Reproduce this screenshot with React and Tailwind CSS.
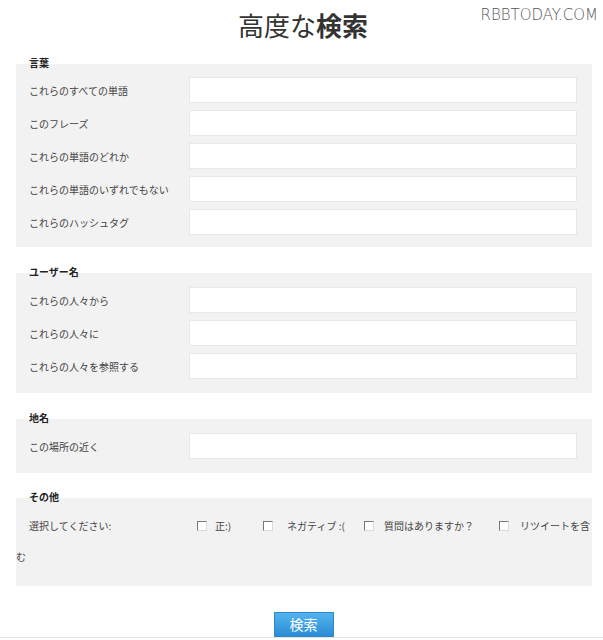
import React from 'react';

const jp = { fontFamily: '"Noto Sans CJK JP", "Noto Sans", sans-serif' };

const sections = [
  {
    title: '言葉',
    pad: 'pt-[13px] pb-[12px]',
    fields: ['これらのすべての単語', 'このフレーズ', 'これらの単語のどれか', 'これらの単語のいずれでもない', 'これらのハッシュタグ'],
  },
  {
    title: 'ユーザー名',
    pad: 'pt-[14px] pb-[14px]',
    fields: ['これらの人々から', 'これらの人々に', 'これらの人々を参照する'],
  },
  {
    title: '地名',
    pad: 'pt-[14px] pb-[14px]',
    fields: ['この場所の近く'],
  },
];

const Check = () => (
  <span className="inline-block w-[10px] h-[10px] align-middle bg-white border-t border-l border-t-[#7a7a7a] border-l-[#7a7a7a] border-b border-r border-b-[#dcdcdc] border-r-[#dcdcdc] -mt-[2px]" />
);

const SectionLabel = ({ children }) => (
  <div className="h-[14px] pl-[13px] text-[10px] leading-[14px] font-bold text-[#222]">{children}</div>
);

export default function App() {
  return (
    <div className="relative w-[603px] h-[640px] overflow-hidden bg-white" style={jp}>
      {/* watermark */}
      <div
        className="absolute right-[5px] top-[4px] text-[15px] font-extralight text-[#555]"
        style={{ fontFamily: '"DejaVu Sans", "Liberation Sans", sans-serif' }}
      >
        RBBTODAY.COM
      </div>

      <h1 className="pt-[12px] pl-[3px] text-center text-[26px] leading-[26px] text-[#333]">
        高度な<span className="font-bold">検索</span>
      </h1>

      <div className="mt-[18px] ml-[16px] w-[576px] flex flex-col gap-[18px]">
        {sections.map((s) => (
          <div key={s.title}>
            <SectionLabel>{s.title}</SectionLabel>
            <div className={`-mt-[6px] bg-[#f2f2f2] pl-[13px] pr-[15px] flex flex-col gap-[7px] ${s.pad}`}>
              {s.fields.map((f) => (
                <div key={f} className="flex items-center h-[26px]">
                  <span className="w-[160px] text-[10px] text-[#444]">{f}</span>
                  <div className="flex-1 h-[26px] bg-white border border-[#e8e8e8]" />
                </div>
              ))}
            </div>
          </div>
        ))}

        <div className="-mt-[1px]">
          <SectionLabel>その他</SectionLabel>
          <div className="-mt-[6px] bg-[#f2f2f2] pt-[12px] pb-[14px] text-[10px] leading-[31px] text-[#444]">
            <span className="inline-block w-[181px] pl-[13px]">選択してください:</span>
            <Check />
            <span className="inline-block w-[56px] pl-[8px]">正:)</span>
            <Check />
            <span className="inline-block w-[91px] pl-[14px]">ネガティブ :(</span>
            <Check />
            <span className="inline-block w-[125px] pl-[10px]">質問はありますか？</span>
            <Check />
            <span className="ml-[11px]">リツイートを含む</span>
          </div>
        </div>
      </div>

      <div className="mt-[26px] flex justify-center border-b border-[#e2e2e2]">
        <button className="w-[60px] h-[25px] ml-[4px] bg-gradient-to-b from-[#52b4ee] to-[#2a8dd5] border border-[#2f86c6] text-white text-[14px] leading-[23px]">
          検索
        </button>
      </div>
    </div>
  );
}
